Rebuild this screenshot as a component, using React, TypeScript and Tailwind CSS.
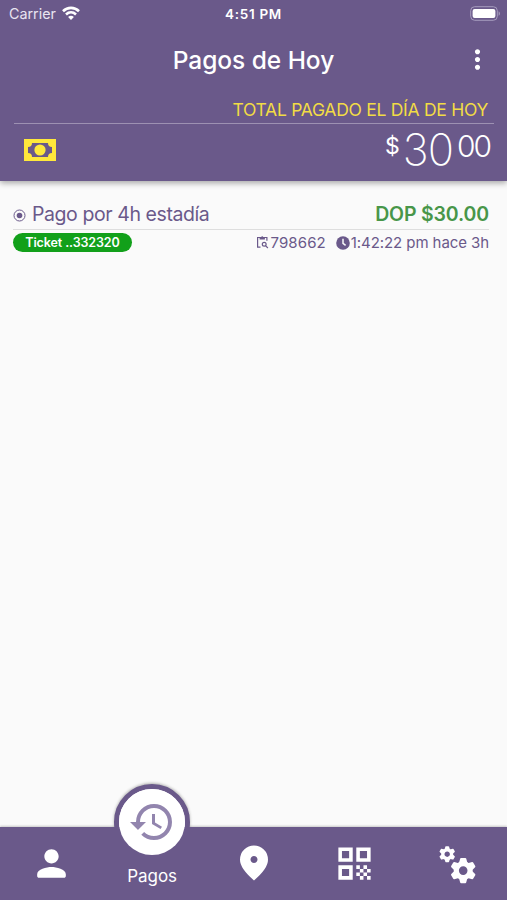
import type { ReactNode } from "react";
import { MdHistory, MdQrCode, MdMoreVert } from "react-icons/md";

const TEETH = [0, 60, 120, 180, 240, 300];

function Gear({ transform }: { transform: string }) {
  return (
    <g transform={transform}>
      <circle r="6.9" fill="none" stroke="currentColor" strokeWidth="5.2" />
      {TEETH.map((angle) => (
        <path key={angle} d="M-4.2-7.6-3-12q.2-.7.9-.7h4.2q.7 0 .9.7L4.2-7.6z" transform={`rotate(${angle})`} />
      ))}
    </g>
  );
}

function StatusBar() {
  return (
    <div className="grid h-[28px] grid-cols-3 items-center px-[9px] text-[14px] leading-none">
      <div className="flex items-center gap-[6px]">
        <span className="text-[14.3px] text-[#e9e4f1]">Carrier</span>
        <svg className="-mt-[2px]" width="18" height="14" viewBox="0 0 18 14" fill="none" stroke="currentColor" strokeWidth="2.6">
          <path d="M1 5.2c4.6-4.5 11.4-4.5 16 0" />
          <path d="M4 8.5c3-2.8 7-2.8 10 0" />
          <path d="M9 14l-2.9-3.1c1.7-1.4 4.1-1.4 5.8 0z" fill="currentColor" stroke="none" />
        </svg>
      </div>
      <span className="pt-px text-center text-[13.5px] font-semibold tracking-[0.7px] whitespace-nowrap">4:51 PM</span>
      <svg className="-mt-[2px] -mr-[3px] justify-self-end" width="31" height="15" viewBox="0 0 31 15">
        <rect x=".7" y=".7" width="26.6" height="13.6" rx="4" fill="none" stroke="#a69bbd" strokeWidth="1" />
        <rect x="2.6" y="2.9" width="22.8" height="9.2" rx="2" fill="#fff" />
        <path d="M28.6 5.2c1.8.8 1.8 3.8 0 4.6z" fill="#a69bbd" />
      </svg>
    </div>
  );
}

function Header() {
  return (
    <header className="relative h-[181px] bg-[#6a598a] text-white shadow-[0_2px_6px_rgba(0,0,0,0.35)]">
      <StatusBar />
      <div className="flex h-[64px] items-center justify-center">
        <h1 className="text-[24.5px] font-medium tracking-[-0.05px]">Pagos de Hoy</h1>
        <MdMoreVert size={31} className="absolute right-[14px] -mt-px" />
      </div>
      <div className="mx-[14px] mr-[13px] h-[32px] border-b border-[#9d91b2] pt-[8px] pr-[6px] text-right text-[17.5px] leading-[20px] tracking-[-0.28px] text-[#f2dc45]">
        TOTAL PAGADO EL DÍA DE HOY
      </div>
      <div className="flex justify-between pr-[17px] pl-[24px]">
        <svg className="mt-[15px]" width="32" height="22" viewBox="0 0 32 22">
          <path d="M0 0h32v22H0z" fill="#ffe93b" />
          <path d="M8 4h16a4 4 0 0 0 4 4v6a4 4 0 0 0-4 4H8a4 4 0 0 0-4-4V8a4 4 0 0 0 4-4z" fill="#6a598a" />
          <circle cx="16" cy="11" r="5.6" fill="#ffe93b" />
        </svg>
        <div className="flex items-start leading-none">
          <span className="mt-[11px] text-[23px]">$</span>
          <span className="mt-[4px] ml-[3px] text-[43.5px] font-[250] tracking-[-1px]">30</span>
          <span className="mt-[7px] ml-[4px] text-[30px] font-[350] tracking-[-2px]">00</span>
        </div>
      </div>
    </header>
  );
}

function PaymentItem() {
  return (
    <div className="px-[13px] pt-[21px] text-[#6a598a]">
      <div className="mr-[5px] flex h-[28px] items-center justify-between border-b border-[#dedede] pb-[2px]">
        <div className="flex items-center gap-[6px]">
          <svg className="mt-[1px]" width="13" height="13" viewBox="0 0 13 13">
            <circle cx="6.5" cy="6.5" r="5.5" fill="none" stroke="currentColor" strokeWidth="1" />
            <circle cx="6.5" cy="6.5" r="2.8" fill="currentColor" />
          </svg>
          <span className="text-[19.5px] tracking-[-0.42px]">Pago por 4h estadía</span>
        </div>
        <span className="text-[19.5px] font-semibold tracking-[-0.15px] text-[#489649]">DOP $30.00</span>
      </div>
      <div className="flex items-center justify-between pt-[3px] pr-[5px]">
        <span className="flex h-[19px] w-[119px] items-center justify-center rounded-full bg-[#12a01a] pt-px text-[12.5px] font-semibold tracking-[-0.1px] text-white">
          Ticket ..332320
        </span>
        <div className="flex items-center text-[15px] leading-[19px]">
          <svg className="-mt-px" width="13" height="14" viewBox="0 0 13 14" fill="none" stroke="currentColor" strokeWidth="1.2">
            <path d="M4.5 12.2H1.6V2.5h9.3v3.2" />
            <path d="M3.6 2.2h1.5a1.2 1.2 0 0 1 2.3 0h1.5v2.4H3.6z" fill="currentColor" stroke="none" />
            <circle cx="8.2" cy="9.3" r="1.9" />
            <path d="m9.7 10.8 2.2 2.2" />
          </svg>
          <span className="ml-px tracking-[0.12px]">798662</span>
          <svg className="ml-[10px]" width="14" height="14" viewBox="0 0 14 14">
            <circle cx="7" cy="7" r="6.8" fill="currentColor" />
            <path d="M7 2.8v4.5l2.6 2" fill="none" stroke="#fafafa" strokeWidth="1.5" />
          </svg>
          <span className="ml-px tracking-[-0.08px]">1:42:22 pm hace 3h</span>
        </div>
      </div>
    </div>
  );
}

function NavItem({ children }: { children: ReactNode }) {
  return <button className="flex flex-1 justify-center pt-[15px]">{children}</button>;
}

function BottomNav() {
  return (
    <nav className="flex h-[73px] bg-[#6a598a] text-white shadow-[0_-1px_2px_rgba(0,0,0,0.2)]">
      <NavItem>
        <svg className="ml-[2px]" width="43" height="43" viewBox="0 0 24 24" fill="currentColor">
          <path d="M12 12c2.21 0 4-1.79 4-4s-1.79-4-4-4-4 1.79-4 4 1.79 4 4 4zm0 2c-2.67 0-8 1.34-8 4v1c0 .55.45 1 1 1h14c.55 0 1-.45 1-1v-1c0-2.66-5.33-4-8-4z" />
        </svg>
      </NavItem>
      <button className="relative flex flex-1 items-end justify-center pb-[13px]">
        <span className="absolute -top-[43px] left-[13px] flex size-[76px] items-center justify-center rounded-full border-5 border-[#6a598a] bg-white text-[#9285ae] [clip-path:inset(-6px_-6px_33px_-6px)] shadow-[0_-1px_3px_rgba(0,0,0,0.3)]" />
        <span className="absolute -top-[38px] left-[18px] flex size-[66px] items-center justify-center rounded-full bg-white text-[#9285ae]">
          <MdHistory size={48} className="shrink-0" />
        </span>
        <span className="relative text-[17px] leading-[22px] tracking-[-0.1px]">Pagos</span>
      </button>
      <NavItem>
        <svg width="42" height="42" viewBox="0 0 24 24" fill="currentColor">
          <path d="M12 22q-4.025-3.425-6.012-6.362T4 10.2q0-3.75 2.413-5.975T12 2t5.588 2.225T20 10.2q0 2.5-1.987 5.438T12 22m0-10q.825 0 1.413-.587T14 10t-.587-1.412T12 8t-1.412.588T10 10t.588 1.413T12 12" />
        </svg>
      </NavItem>
      <NavItem>
        <MdQrCode size={43} />
      </NavItem>
      <NavItem>
        <svg className="ml-[2px]" width="38" height="42" viewBox="0 0 38 42" fill="currentColor">
          <Gear transform="translate(9.2 12.2) scale(.63)" />
          <Gear transform="translate(25.2 28.6)" />
        </svg>
      </NavItem>
    </nav>
  );
}

export default function App() {
  return (
    <div className="flex h-screen flex-col overflow-hidden bg-[#fafafa] font-['Inter',sans-serif]">
      <Header />
      <main className="flex-1">
        <PaymentItem />
      </main>
      <BottomNav />
    </div>
  );
}
